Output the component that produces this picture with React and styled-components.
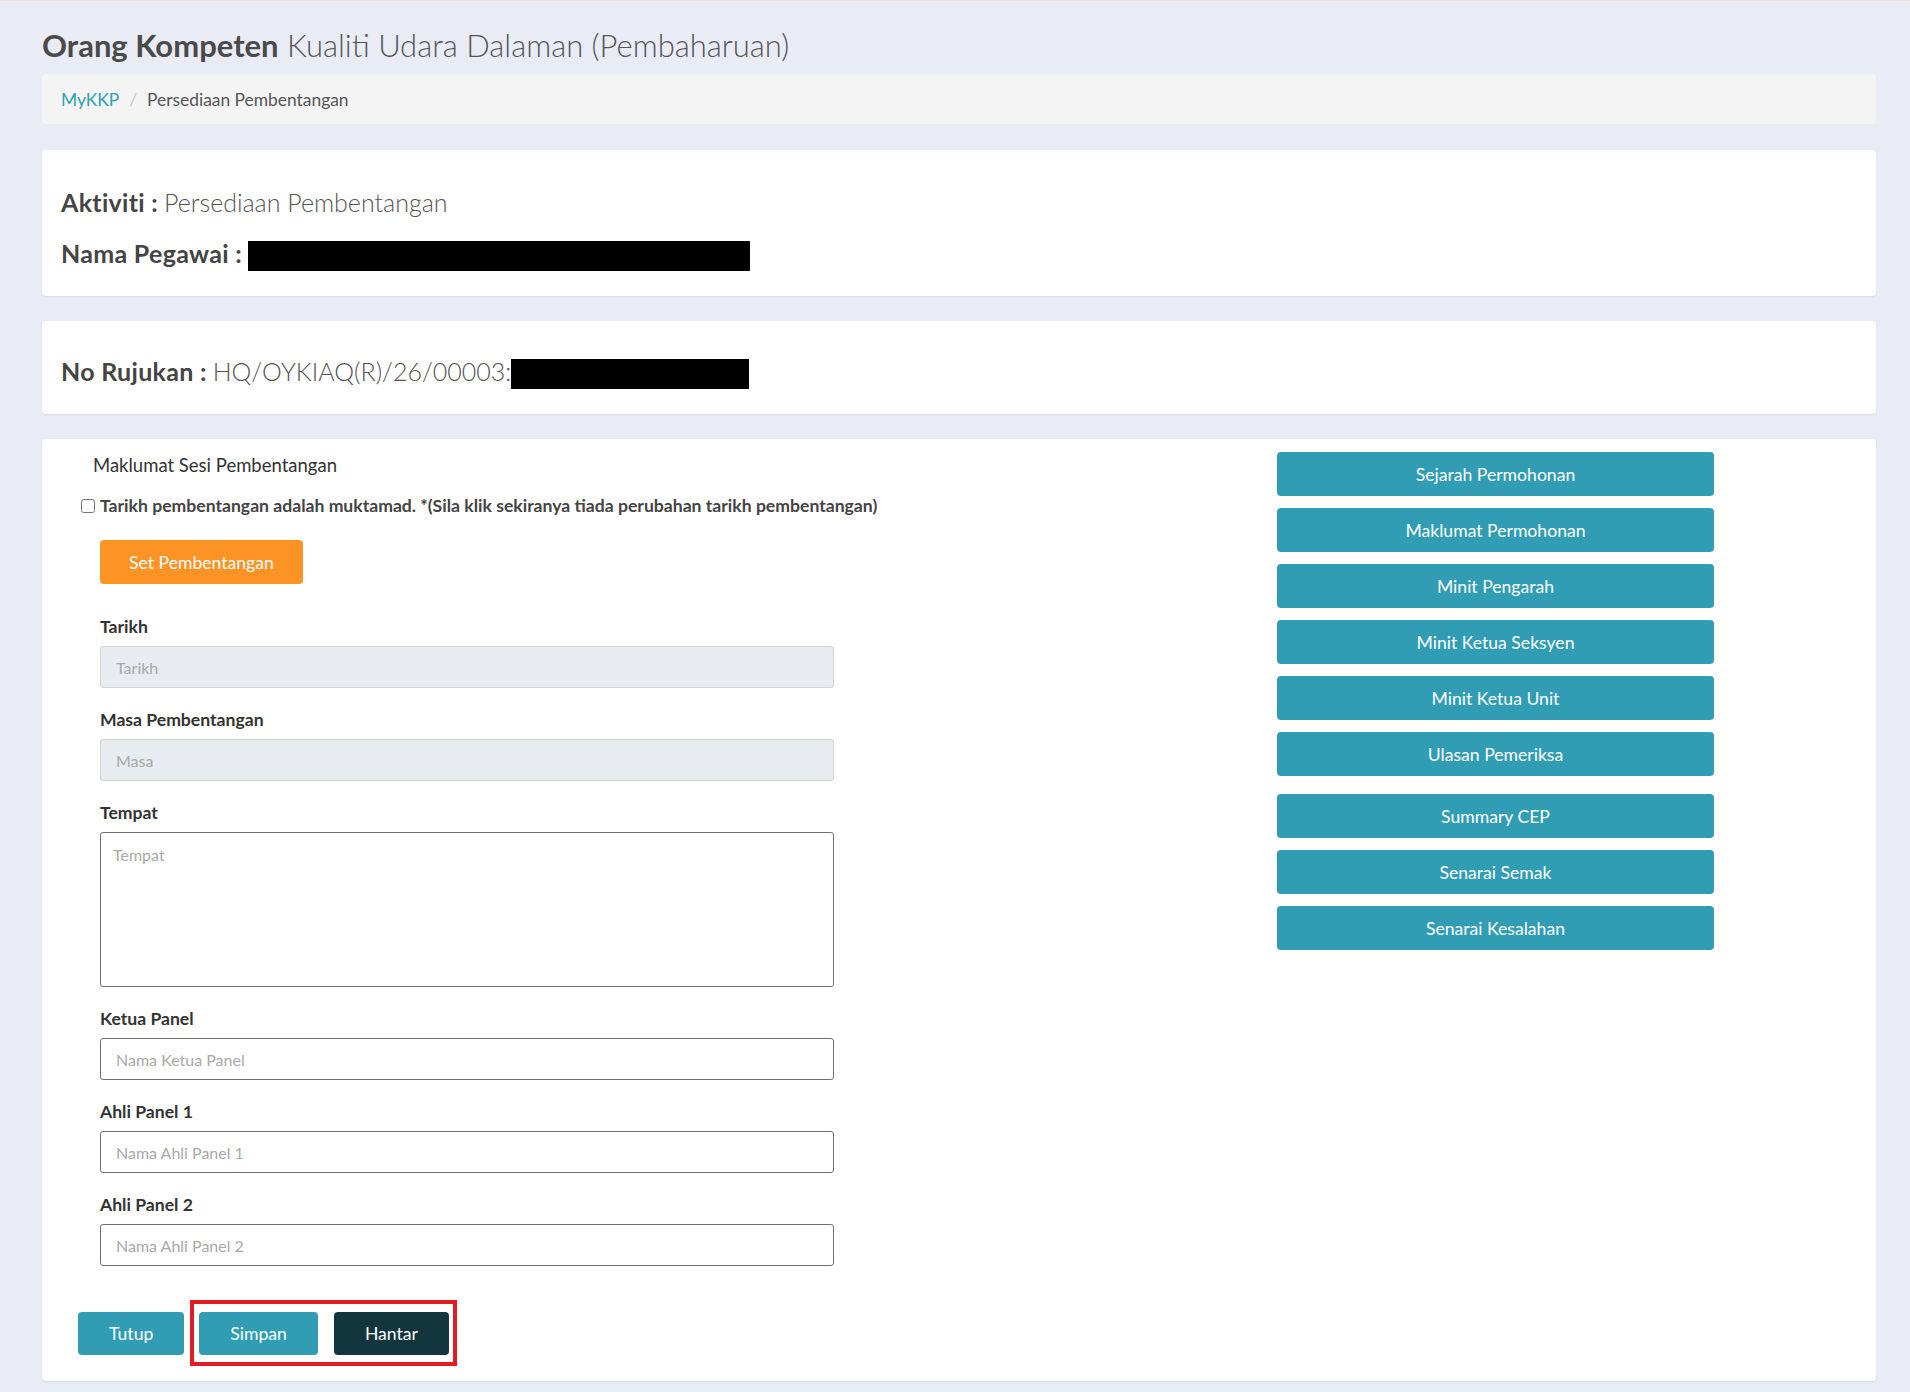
import React from 'react';
import styled, { createGlobalStyle } from 'styled-components';

const GlobalStyle = createGlobalStyle`
  html, body {
    margin: 0;
    padding: 0;
    background: #e9ecf5;
    font-family: Lato, "Open Sans", sans-serif;
  }
  * {
    box-sizing: border-box;
  }
`;

const Page = styled.div`
  min-height: 1392px;
  border-top: 1px solid #f7dede;
  padding: 0 34px 11px 42px;
`;

const Title = styled.h1`
  margin: 26px 0 11px;
  font-family: "Lato Light", Lato, sans-serif;
  font-size: 31px;
  line-height: 36px;
  font-weight: 300;
  color: #555;

  strong {
    font-family: Lato, sans-serif;
    font-weight: 700;
    color: #4a4a4a;
  }
`;

const Breadcrumb = styled.div`
  display: flex;
  align-items: center;
  height: 50px;
  padding: 0 19px;
  background: #f4f4f4;
  border-radius: 4px;
  font-size: 17.4px;
  color: #555;
  margin-bottom: 26px;
`;

const Crumb = styled.a`
  color: #2ea0b7;
  text-decoration: none;
`;

const Sep = styled.span`
  color: #c8c8c8;
  margin: 0 10px;
`;

const Card = styled.div`
  background: #fff;
  border-radius: 4px;
  box-shadow: 0 1px 2px rgba(0, 0, 0, 0.08);
  margin-bottom: 25px;
  padding: ${(p) => p.$pad || '0'};
`;

const InfoLine = styled.div`
  display: flex;
  align-items: center;
  height: 30px;
  font-family: "Lato Light", Lato, sans-serif;
  font-size: 25px;
  line-height: 30px;
  font-weight: 300;
  color: #555;
  margin-top: ${(p) => p.$gap || 0}px;

  b {
    font-family: Lato, sans-serif;
    font-weight: 700;
    letter-spacing: 0.3px;
    color: #444;
    margin-right: 6px;
  }
`;

const Redacted = styled.span`
  display: inline-block;
  flex: none;
  background: #000;
  width: ${(p) => p.$w}px;
  height: 30px;
  margin-top: 6px;
`;

const FormCard = styled(Card)`
  display: grid;
  grid-template-columns: 1fr 437px;
  padding: 0 162px 15px 0;
  margin-bottom: 0;
`;

const LeftCol = styled.div`
  padding-top: 14px;
`;

const SectionHead = styled.div`
  margin-left: 51px;
  font-size: 18.5px;
  line-height: 24px;
  color: #333;
`;

const CheckRow = styled.label`
  display: flex;
  align-items: center;
  margin: 17px 0 22px 39px;
  font-size: 17.6px;
  line-height: 24px;
  font-weight: 700;
  color: #444;

  input {
    width: 14px;
    height: 14px;
    margin: 0 5px 0 0;
  }
`;

const Button = styled.button`
  height: ${(p) => p.$h || 43}px;
  padding: 0 ${(p) => p.$px || 31}px;
  border: none;
  border-radius: 4px;
  background: ${(p) => p.$bg || '#309db5'};
  color: #fff;
  font-family: Lato, sans-serif;
  font-size: 17.6px;
  cursor: pointer;
`;

const SetButton = styled(Button)`
  display: block;
  margin: 0 0 31px 58px;
`;

const Group = styled.div`
  margin: 0 0 ${(p) => (p.$last ? 0 : 20)}px 58px;
  width: 734px;
`;

const Label = styled.div`
  font-size: 17.6px;
  line-height: 24px;
  font-weight: 700;
  color: #333;
  margin-bottom: 7px;
`;

const Field = styled.input`
  display: block;
  width: 100%;
  height: 42px;
  padding: 0 15px;
  font-family: Lato, sans-serif;
  font-size: 16px;
  color: #333;
  background: ${(p) => (p.disabled ? '#e8ebef' : '#fff')};
  border: 1px solid ${(p) => (p.disabled ? '#cfd3d8' : '#707070')};
  border-radius: 3px;

  &::placeholder {
    color: #a9a9a9;
  }
`;

const Area = styled.textarea`
  display: block;
  width: 100%;
  height: 155px;
  padding: 11px 12px;
  font-family: Lato, sans-serif;
  font-size: 16px;
  line-height: 22px;
  border: 1px solid #707070;
  border-radius: 3px;
  resize: none;

  &::placeholder {
    color: #a9a9a9;
  }
`;

const Actions = styled.div`
  display: flex;
  align-items: center;
  margin: 34px 0 0 36px;
`;

const Highlight = styled.div`
  display: flex;
  gap: 16px;
  margin-left: 6px;
  padding: 8px 4px 7px 5px;
  border: 4px solid #e31b23;
`;

const RightCol = styled.div`
  padding-top: 13px;
`;

const SideGroup = styled.div`
  display: flex;
  flex-direction: column;
  gap: 12px;
  margin-bottom: 18px;
`;

const SideButton = styled(Button)`
  width: 100%;
  padding: 0;
`;

const sideTop = [
  'Sejarah Permohonan',
  'Maklumat Permohonan',
  'Minit Pengarah',
  'Minit Ketua Seksyen',
  'Minit Ketua Unit',
  'Ulasan Pemeriksa',
];
const sideBottom = ['Summary CEP', 'Senarai Semak', 'Senarai Kesalahan'];

const App = () => {
  return (
    <>
      <GlobalStyle />
      <Page>
        <Title>
          <strong>Orang Kompeten</strong> Kualiti Udara Dalaman (Pembaharuan)
        </Title>
        <Breadcrumb>
          <Crumb href="#">MyKKP</Crumb>
          <Sep>/</Sep>
          <span>Persediaan Pembentangan</span>
        </Breadcrumb>

        <Card $pad="37px 19px 28px">
          <InfoLine>
            <b>Aktiviti :</b> Persediaan Pembentangan
          </InfoLine>
          <InfoLine $gap={21}>
            <b>Nama Pegawai :</b>
            <Redacted $w={502} />
          </InfoLine>
        </Card>

        <Card $pad="35px 19px 28px">
          <InfoLine>
            <b>No Rujukan :</b> HQ/OYKIAQ(R)/26/00003:
            <Redacted $w={238} />
          </InfoLine>
        </Card>

        <FormCard>
          <LeftCol>
            <SectionHead>Maklumat Sesi Pembentangan</SectionHead>
            <CheckRow>
              <input type="checkbox" />
              Tarikh pembentangan adalah muktamad. *(Sila klik sekiranya tiada perubahan tarikh pembentangan)
            </CheckRow>
            <SetButton $bg="#fe9325" $h={44} $px={29}>Set Pembentangan</SetButton>

            <Group>
              <Label>Tarikh</Label>
              <Field placeholder="Tarikh" disabled />
            </Group>
            <Group>
              <Label>Masa Pembentangan</Label>
              <Field placeholder="Masa" disabled />
            </Group>
            <Group>
              <Label>Tempat</Label>
              <Area placeholder="Tempat" />
            </Group>
            <Group>
              <Label>Ketua Panel</Label>
              <Field placeholder="Nama Ketua Panel" />
            </Group>
            <Group>
              <Label>Ahli Panel 1</Label>
              <Field placeholder="Nama Ahli Panel 1" />
            </Group>
            <Group $last>
              <Label>Ahli Panel 2</Label>
              <Field placeholder="Nama Ahli Panel 2" />
            </Group>

            <Actions>
              <Button>Tutup</Button>
              <Highlight>
                <Button>Simpan</Button>
                <Button $bg="#13353e">Hantar</Button>
              </Highlight>
            </Actions>
          </LeftCol>

          <RightCol>
            <SideGroup>
              {sideTop.map((t) => (
                <SideButton key={t} $h={44}>{t}</SideButton>
              ))}
            </SideGroup>
            <SideGroup>
              {sideBottom.map((t) => (
                <SideButton key={t} $h={44}>{t}</SideButton>
              ))}
            </SideGroup>
          </RightCol>
        </FormCard>
      </Page>
    </>
  );
};

export default App;
